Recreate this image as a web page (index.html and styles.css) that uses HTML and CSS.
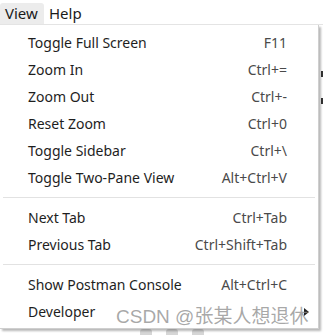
FILE: index.html
```html
<!DOCTYPE html>
<html lang="en">
<head>
    <meta charset="UTF-8">
    <title>View menu</title>
    <link rel="stylesheet" href="styles.css">
</head>
<body>
    <div class="menubar">
        <span class="menubar-item active">View</span>
        <span class="menubar-item">Help</span>
    </div>

    <div class="backdrop">
        <span class="bg-mark bg-m1"></span>
        <span class="bg-mark bg-m2"></span>
        <div class="bg-icons">
            <span class="bg-icon"></span>
            <span class="bg-icon"></span>
            <span class="bg-icon"></span>
        </div>
    </div>

    <div class="menu">
        <div class="menu-item"><span>Toggle Full Screen</span><span class="key">F11</span></div>
        <div class="menu-item"><span>Zoom In</span><span class="key">Ctrl+=</span></div>
        <div class="menu-item"><span>Zoom Out</span><span class="key">Ctrl+-</span></div>
        <div class="menu-item"><span>Reset Zoom</span><span class="key">Ctrl+0</span></div>
        <div class="menu-item"><span>Toggle Sidebar</span><span class="key">Ctrl+\</span></div>
        <div class="menu-item"><span>Toggle Two-Pane View</span><span class="key">Alt+Ctrl+V</span></div>
        <div class="separator"></div>
        <div class="menu-item"><span>Next Tab</span><span class="key">Ctrl+Tab</span></div>
        <div class="menu-item"><span>Previous Tab</span><span class="key">Ctrl+Shift+Tab</span></div>
        <div class="separator"></div>
        <div class="menu-item"><span>Show Postman Console</span><span class="key">Alt+Ctrl+C</span></div>
        <div class="menu-item"><span>Developer</span><span class="submenu-arrow"></span></div>

        <div class="watermark">CSDN @张某人想退休</div>
    </div>
</body>
</html>
```

FILE: styles.css
```css
* {
    margin: 0;
    padding: 0;
    box-sizing: border-box;
}

body {
    font-family: 'Noto Sans', 'Noto Sans CJK SC', sans-serif;
    background: #ffffff;
    color: #1e1e1e;
    width: 323px;
    height: 335px;
    overflow: hidden;
    position: relative;
}

.menubar {
    display: flex;
    height: 25px;
    padding-top: 3px;
    border-bottom: 1px solid #e4e4e4;
}

.menubar-item {
    font-size: 15px;
    line-height: 21px;
    padding: 0 7px 0 5px;
    color: #1a1a1a;
}

.menubar-item.active {
    background: #ececec;
    border-radius: 3px 3px 0 0;
    width: 44px;
}

/* bits of the window peeking out behind the menu */
.bg-mark {
    position: absolute;
    left: 321px;
    width: 2px;
    height: 6px;
    background: #333;
}

.bg-m1 { top: 71px; }
.bg-m2 { top: 98px; }

.bg-icons {
    position: absolute;
    left: 140px;
    top: 329px;
    display: flex;
    gap: 14px;
}

.bg-icon {
    width: 12px;
    height: 10px;
    background: #d6d6d6;
    border-radius: 3px 3px 0 0;
}

.menu {
    position: absolute;
    left: 0;
    top: 25px;
    width: 319px;
    padding: 4px 0 3px 0;
    background: #ffffff;
    border-right: 1px solid #cfcfcf;
    border-bottom: 1px solid #cfcfcf;
    box-shadow: 2px 2px 2px rgba(0, 0, 0, 0.28);
}

.menu-item {
    display: flex;
    justify-content: space-between;
    align-items: center;
    height: 27px;
    padding: 0 31px 0 28px;
    font-size: 14px;
    color: #1e1e1e;
}

.key {
    color: #4a4a4a;
}

.separator {
    height: 1px;
    background: #e2e2e2;
    margin: 6px 3px 6px 3px;
}

.submenu-arrow {
    width: 0;
    height: 0;
    margin-right: -22px;
    border-top: 4px solid transparent;
    border-bottom: 4px solid transparent;
    border-left: 5px solid #222;
}

.watermark {
    position: absolute;
    left: 116px;
    top: 276px;
    font-family: 'Liberation Sans', 'Noto Sans CJK SC', sans-serif;
    font-size: 19px;
    color: rgba(140, 140, 140, 0.75);
    white-space: nowrap;
}
```
